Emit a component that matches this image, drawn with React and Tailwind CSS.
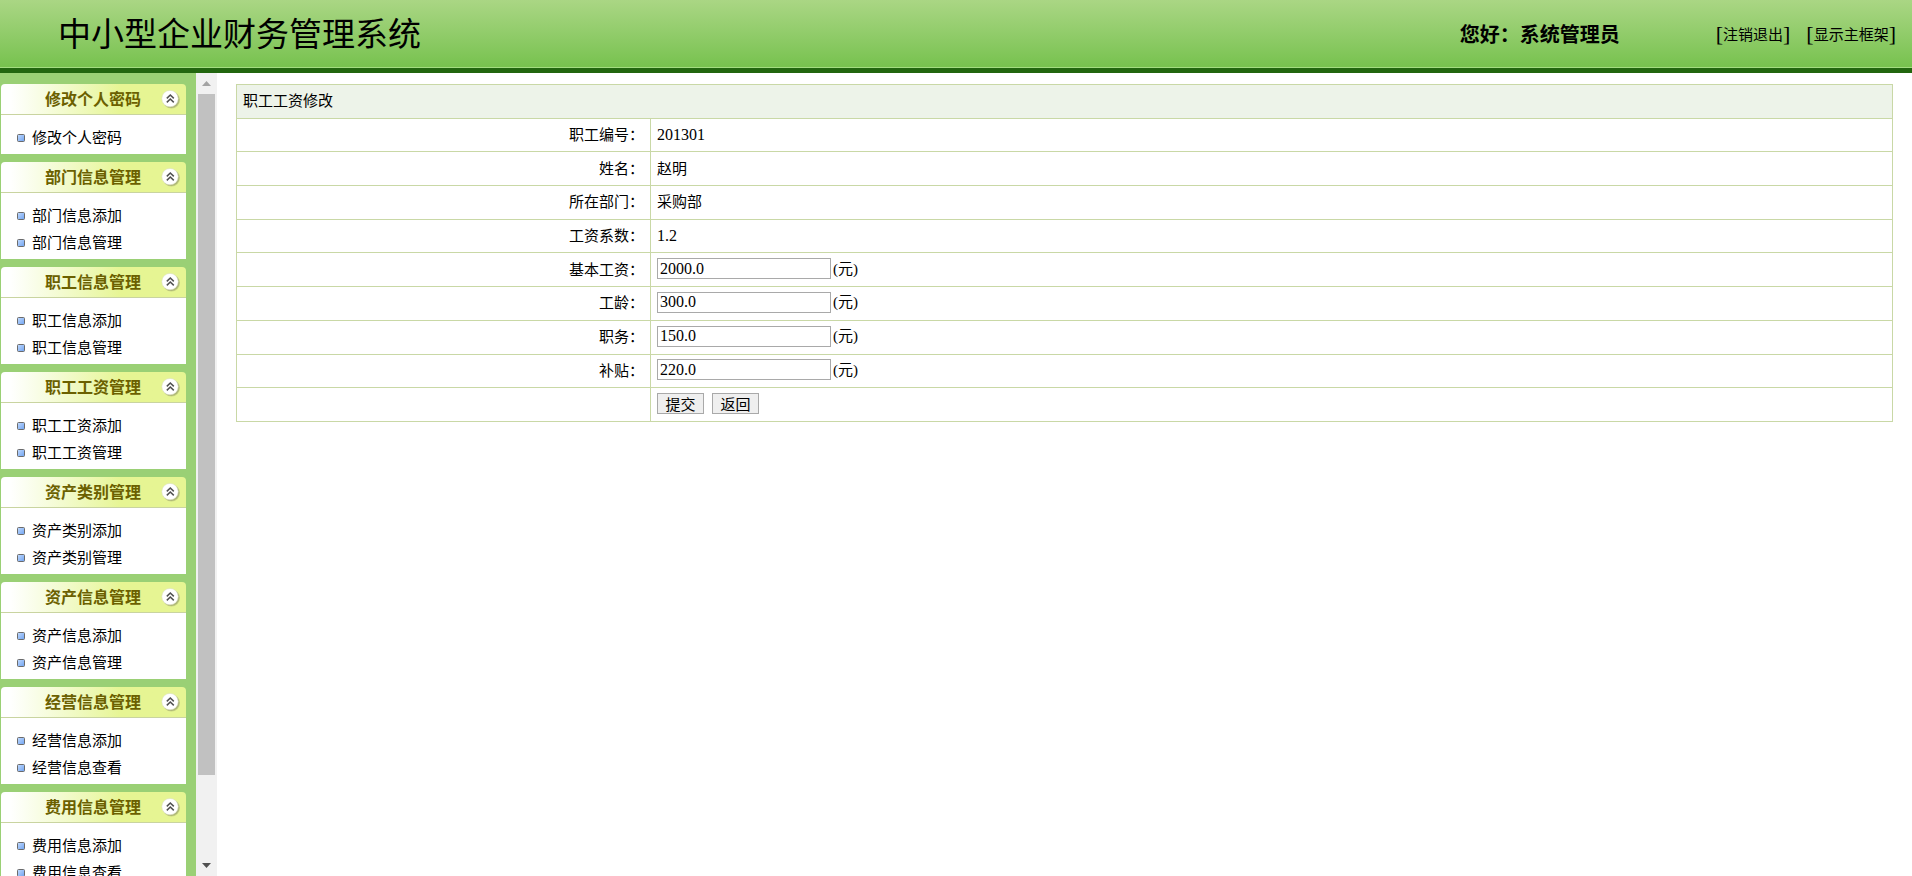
import React from "react";

const cjk = "font-['Noto_Sans_CJK_SC',sans-serif]";
const latin = "font-['Liberation_Serif','Noto_Sans_CJK_SC',serif]";

const menu = [
  { title: "修改个人密码", items: ["修改个人密码"] },
  { title: "部门信息管理", items: ["部门信息添加", "部门信息管理"] },
  { title: "职工信息管理", items: ["职工信息添加", "职工信息管理"] },
  { title: "职工工资管理", items: ["职工工资添加", "职工工资管理"] },
  { title: "资产类别管理", items: ["资产类别添加", "资产类别管理"] },
  { title: "资产信息管理", items: ["资产信息添加", "资产信息管理"] },
  { title: "经营信息管理", items: ["经营信息添加", "经营信息查看"] },
  { title: "费用信息管理", items: ["费用信息添加", "费用信息查看"] },
];

const details = [
  ["职工编号", "201301", true],
  ["姓名", "赵明", false],
  ["所在部门", "采购部", false],
  ["工资系数", "1.2", true],
];

const fields = [
  { id: "base", label: "基本工资", value: "2000.0" },
  { id: "seniority", label: "工龄", value: "300.0" },
  { id: "post", label: "职务", value: "150.0" },
  { id: "subsidy", label: "补贴", value: "220.0" },
];

function CollapseIcon() {
  return (
    <svg width="20" height="20" viewBox="0 0 20 20" aria-hidden="true">
      <circle cx="10.4" cy="11" r="8.6" fill="#8f9468" opacity="0.35" />
      <circle cx="10" cy="10.6" r="8.4" fill="#8f9468" opacity="0.45" />
      <circle cx="9" cy="9.6" r="8.2" fill="#ffffff" stroke="#d9dcc0" strokeWidth="0.5" />
      <path d="M5.8 9.4 L9.3 6 L12.8 9.4 M5.8 13.4 L9.3 10 L12.8 13.4" fill="none" stroke="#505050" strokeWidth="1.5" />
    </svg>
  );
}

function Bullet() {
  return (
    <svg width="8" height="8" viewBox="0 0 8 8" aria-hidden="true">
      <defs>
        <linearGradient id="bullet" x1="0" y1="0" x2="1" y2="1">
          <stop offset="0" stopColor="#c4dcff" />
          <stop offset="1" stopColor="#6ea2f0" />
        </linearGradient>
      </defs>
      <rect x="0.5" y="0.5" width="7" height="7" rx="1" fill="url(#bullet)" stroke="#6b6b6b" />
    </svg>
  );
}

function Bracketed({ children }) {
  return (
    <a href="#" className="flex items-center text-[15px] leading-6">
      <span className={`${latin} text-[22px] leading-6`}>[</span>
      {children}
      <span className={`${latin} text-[22px] leading-6`}>]</span>
    </a>
  );
}

function MenuGroup({ title, items }) {
  return (
    <section className="shrink-0">
      <h2 className="h-[31px] rounded-t border-b border-[#c9d4a0] bg-linear-to-r from-white from-5% via-[#e6f593] via-65% to-[#e6f593]">
        <button type="button" className="flex h-full w-full items-center justify-between pr-[5px] pl-11 text-base font-bold text-[#6b6000]">
          <span className="pb-0.5 leading-6">{title}</span>
          <CollapseIcon />
        </button>
      </h2>
      <ul className="bg-white pt-[9px] pb-[3px]">
        {items.map((item) => (
          <li key={item}>
            <a href="#" className="flex h-[27px] items-center gap-[7px] pl-4 text-[15px]">
              <Bullet />
              <span className="pb-px">{item}</span>
            </a>
          </li>
        ))}
      </ul>
    </section>
  );
}

function ScrollBar() {
  return (
    <div className="flex w-[21px] shrink-0 flex-col items-center bg-[#f1f1f1]" aria-hidden="true">
      <div className="flex h-[21px] items-center">
        <svg width="9" height="5" viewBox="0 0 9 5"><path d="M4.5 0 L9 5 H0 Z" fill="#a3a3a3" /></svg>
      </div>
      <div className="w-[17px] grow-[681] bg-[#c1c1c1]" />
      <div className="grow-[80]" />
      <div className="flex h-[21px] items-center">
        <svg width="9" height="5" viewBox="0 0 9 5"><path d="M0 0 H9 L4.5 5 Z" fill="#505050" /></svg>
      </div>
    </div>
  );
}

const row = "h-[33px]";
const cell = "border border-[#c9d8a6] px-1.5 pt-0 pb-0.5";
const button = "h-[21px] w-[47px] border border-[#a9a9a9] bg-[#efefef] leading-[18px]";

function SalaryForm() {
  return (
    <form onSubmit={(e) => e.preventDefault()}>
      <table className="h-[338px] w-full table-fixed border-collapse text-[15px] leading-[22px]">
        <colgroup>
          <col className="w-1/4" />
          <col />
        </colgroup>
        <tbody>
          <tr className={row}>
            <th colSpan={2} className={`${cell} bg-[#edf3e9] text-left font-normal`}>职工工资修改</th>
          </tr>
          {details.map(([label, value, numeric]) => (
            <tr key={label} className={row}>
              <th scope="row" className={`${cell} text-right font-normal`}>{label}：</th>
              <td className={cell}>{numeric ? <span className={`${latin} text-base leading-[22px]`}>{value}</span> : value}</td>
            </tr>
          ))}
          {fields.map(({ id, label, value }) => (
            <tr key={id} className={row}>
              <th scope="row" className={`${cell} text-right font-normal`}>
                <label htmlFor={id}>{label}：</label>
              </th>
              <td className={cell}>
                <div className="flex items-center gap-[2px]">
                  <input id={id} type="text" defaultValue={value} className={`${latin} h-[21px] w-[174px] border border-[#a9a9a9] bg-white px-[2px] text-base`} />
                  <span className={`${latin} leading-[22px]`}>(元)</span>
                </div>
              </td>
            </tr>
          ))}
          <tr className={row}>
            <td className={cell} />
            <td className={cell}>
              <div className="flex gap-2">
                <button type="submit" className={button}>提交</button>
                <button type="button" className={button}>返回</button>
              </div>
            </td>
          </tr>
        </tbody>
      </table>
    </form>
  );
}

export default function App() {
  return (
    <div className={`${cjk} flex h-screen flex-col overflow-hidden bg-white text-black`}>
      <header className="shrink-0 border-b-[5px] border-[#22660f]">
        <div className="flex h-[68px] items-center border-b border-[#a3dc80] bg-linear-to-b from-[#aad684] to-[#77c24e] pr-4 pl-[58px]">
          <h1 className="grow pb-1 text-[33px] leading-10">中小型企业财务管理系统</h1>
          <p className="text-xl leading-6 font-bold">您好：系统管理员</p>
          <nav className="ml-24 flex gap-4">
            <Bracketed>注销退出</Bracketed>
            <Bracketed>显示主框架</Bracketed>
          </nav>
        </div>
      </header>
      <div className="flex min-h-0 grow">
        <nav className="flex w-[196px] shrink-0 flex-col gap-2 overflow-hidden bg-[#9ad075] pt-[11px] pr-[10px] pl-px">
          {menu.map((group) => (
            <MenuGroup key={group.title} {...group} />
          ))}
        </nav>
        <ScrollBar />
        <main className="min-w-0 grow px-[19px] pt-[11px]">
          <SalaryForm />
        </main>
      </div>
    </div>
  );
}
